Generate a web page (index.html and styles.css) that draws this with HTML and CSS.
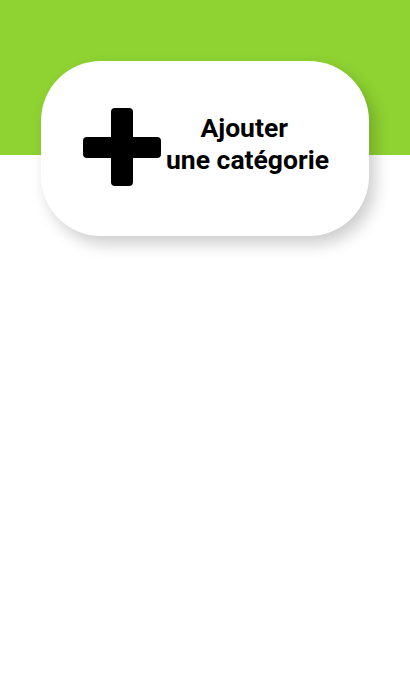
FILE: index.html
```html
<!DOCTYPE html>
<html lang="fr">
<head>
<meta charset="utf-8">
<link rel="stylesheet" href="styles.css">
</head>
<body>
<div class="page">
  <div class="card">
    <svg class="plus" width="78" height="78" viewBox="0 0 78 78" aria-hidden="true">
      <rect x="28" y="0" width="22" height="78" rx="4" fill="#000"/>
      <rect x="0" y="29" width="78" height="21" rx="4" fill="#000"/>
    </svg>
    <div class="label">Ajouter&nbsp;<br>une catégorie</div>
  </div>
</div>
</body>
</html>
```
FILE: styles.css
```css
html, body { margin: 0; padding: 0; }
body {
  width: 410px;
  height: 690px;
  background: linear-gradient(to bottom, #8ed332 0, #8ed332 155px, #fff 155px);
  font-family: Roboto, "Liberation Sans", sans-serif;
}
.page {
  padding-top: 61px;
  padding-left: 41px;
}
.card {
  width: 328px;
  height: 175px;
  box-sizing: border-box;
  background: #fff;
  border-radius: 60px;
  box-shadow: 6px 8px 16px rgba(0,0,0,0.2);
  display: flex;
  align-items: center;
  padding-left: 42px;
  gap: 5px;
}
.plus { flex: none; margin-top: -3px; }
.label {
  text-align: center;
  font-weight: 700;
  font-size: 26.5px;
  line-height: 32px;
  color: #000;
  margin-bottom: 10px;
}
```
